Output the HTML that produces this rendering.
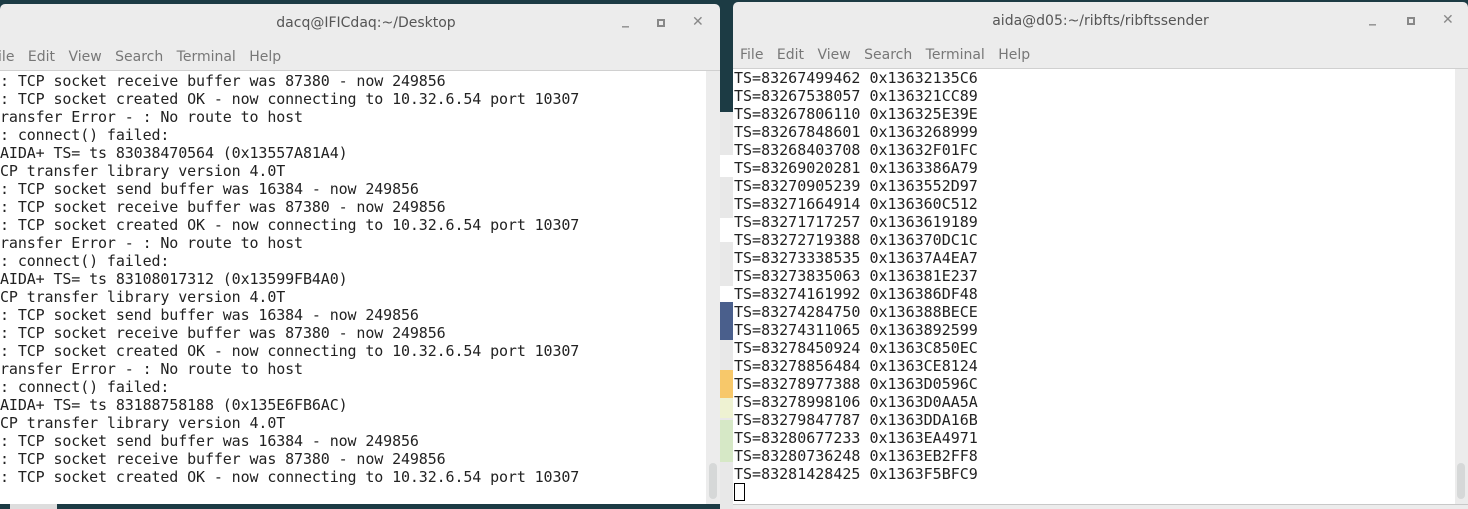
<!DOCTYPE html>
<html><head><style>
*{margin:0;padding:0;box-sizing:border-box}
body{width:1468px;height:509px;background:#1c3b44;position:relative;overflow:hidden;font-family:"DejaVu Sans",sans-serif}
.win{position:absolute;background:#ececec;border-radius:5px 5px 0 0}
.title{position:absolute;left:0;right:0;text-align:center;font-size:14px;color:#555}
.menu{position:absolute;font-size:14px;color:#777;word-spacing:9px;white-space:pre}
.ctl{position:absolute;font-size:14px;color:#888;font-weight:bold}
.term{position:absolute;background:#fff;font-family:"DejaVu Sans Mono",monospace;font-size:15px;line-height:18px;color:#222;white-space:pre;overflow:hidden}
.sb{position:absolute;background:#ececec}
.thumb{position:absolute;background:#d6d8d8;border-radius:4px;width:8px}
</style></head><body>
<div style="position:absolute;left:720px;top:112px;width:14px;height:397px;background:#e8e8e8"></div>
<div style="position:absolute;left:720px;top:155px;width:14px;height:22px;background:#fff"></div>
<div style="position:absolute;left:720px;top:218px;width:14px;height:24px;background:#fff"></div>
<div style="position:absolute;left:720px;top:286px;width:14px;height:16px;background:#fff"></div>
<div style="position:absolute;left:720px;top:302px;width:14px;height:38px;background:#4a5f8c"></div>
<div style="position:absolute;left:720px;top:370px;width:14px;height:28px;background:#f7c86a"></div>
<div style="position:absolute;left:720px;top:398px;width:14px;height:20px;background:#eef2d2"></div>
<div style="position:absolute;left:720px;top:420px;width:14px;height:42px;background:#d6e8c6"></div>
<div style="position:absolute;left:10px;top:504px;width:47px;height:5px;background:#ddd"></div>

<div class="win" style="left:0;top:4px;width:720px;height:500px">
 <div class="title" style="top:11px;padding-left:12px">dacq@IFICdaq:~/Desktop</div>
 <div class="ctl" style="left:622px;top:8px">_</div>
 <div style="position:absolute;left:657px;top:15px;width:8px;height:8px;border:2px solid #888"></div>
 <div class="ctl" style="left:692px;top:10px">✕</div>
 <div class="menu" style="left:-9px;top:45px">File Edit View Search Terminal Help</div>
 <div style="position:absolute;left:0;top:66px;width:720px;height:1px;background:#d0d0d0"></div>
 <div class="term" style="left:0;top:67px;width:706px;height:433px;padding-top:1px;letter-spacing:-0.12px">: TCP socket receive buffer was 87380 - now 249856
: TCP socket created OK - now connecting to 10.32.6.54 port 10307
ransfer Error - : No route to host
: connect() failed:
AIDA+ TS= ts 83038470564 (0x13557A81A4)
CP transfer library version 4.0T
: TCP socket send buffer was 16384 - now 249856
: TCP socket receive buffer was 87380 - now 249856
: TCP socket created OK - now connecting to 10.32.6.54 port 10307
ransfer Error - : No route to host
: connect() failed:
AIDA+ TS= ts 83108017312 (0x13599FB4A0)
CP transfer library version 4.0T
: TCP socket send buffer was 16384 - now 249856
: TCP socket receive buffer was 87380 - now 249856
: TCP socket created OK - now connecting to 10.32.6.54 port 10307
ransfer Error - : No route to host
: connect() failed:
AIDA+ TS= ts 83188758188 (0x135E6FB6AC)
CP transfer library version 4.0T
: TCP socket send buffer was 16384 - now 249856
: TCP socket receive buffer was 87380 - now 249856
: TCP socket created OK - now connecting to 10.32.6.54 port 10307</div>
 <div class="sb" style="left:706px;top:67px;width:14px;height:433px"><div class="thumb" style="left:3px;top:392px;height:36px"></div></div>
</div>

<div class="win" style="left:733px;top:2px;width:735px;height:507px">
 <div class="title" style="top:11px">aida@d05:~/ribfts/ribftssender</div>
 <div class="ctl" style="left:636px;top:8px">_</div>
 <div style="position:absolute;left:674px;top:15px;width:8px;height:8px;border:2px solid #888"></div>
 <div class="ctl" style="left:709px;top:10px">✕</div>
 <div class="menu" style="left:7px;top:45px">File Edit View Search Terminal Help</div>
 <div style="position:absolute;left:0;top:66px;width:735px;height:1px;background:#d0d0d0"></div>
 <div class="term" style="left:0;top:67px;width:722px;height:435px;padding-left:1px">TS=83267499462 0x13632135C6
TS=83267538057 0x136321CC89
TS=83267806110 0x136325E39E
TS=83267848601 0x1363268999
TS=83268403708 0x13632F01FC
TS=83269020281 0x1363386A79
TS=83270905239 0x1363552D97
TS=83271664914 0x136360C512
TS=83271717257 0x1363619189
TS=83272719388 0x136370DC1C
TS=83273338535 0x13637A4EA7
TS=83273835063 0x136381E237
TS=83274161992 0x136386DF48
TS=83274284750 0x136388BECE
TS=83274311065 0x1363892599
TS=83278450924 0x1363C850EC
TS=83278856484 0x1363CE8124
TS=83278977388 0x1363D0596C
TS=83278998106 0x1363D0AA5A
TS=83279847787 0x1363DDA16B
TS=83280677233 0x1363EA4971
TS=83280736248 0x1363EB2FF8
TS=83281428425 0x1363F5BFC9
<span style="display:inline-block;width:11px;height:18px;border:1px solid #000;vertical-align:top"></span></div>
 <div class="sb" style="left:722px;top:67px;width:13px;height:435px"><div class="thumb" style="left:2px;top:394px;height:36px"></div></div>
 <div style="position:absolute;left:0;top:502px;width:735px;height:1px;background:#c8c8c8"></div>
</div>
</body></html>
